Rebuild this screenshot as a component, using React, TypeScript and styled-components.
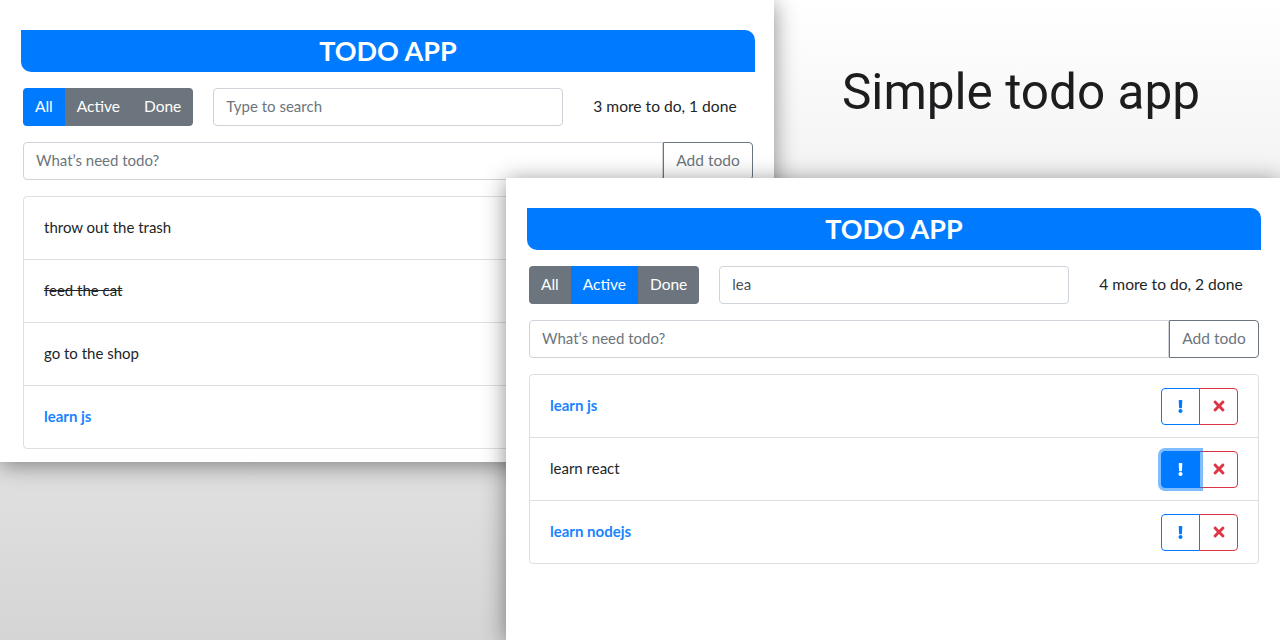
import React from 'react';
import styled, { createGlobalStyle, css } from 'styled-components';
import { FaExclamation, FaTimes } from 'react-icons/fa';

const Global = createGlobalStyle`
  html, body { margin: 0; padding: 0; }
  body {
    width: 1280px;
    height: 640px;
    overflow: hidden;
    font-family: Lato, "Noto Sans", sans-serif;
    color: #212529;
  }
  * { box-sizing: border-box; }
`;

const Stage = styled.div`
  position: relative;
  width: 1280px;
  height: 640px;
  overflow: hidden;
  background: linear-gradient(180deg, #ffffff 0%, #d5d5d5 100%);
`;

const Caption = styled.h2`
  position: absolute;
  left: 770px;
  top: 0;
  width: 502px;
  height: 184px;
  margin: 0;
  display: flex;
  align-items: center;
  justify-content: center;
  font-family: Roboto, "Liberation Sans", sans-serif;
  font-weight: 400;
  font-size: 49.5px;
  color: #1d1d1f;
`;

const Window = styled.div<{ $x: number; $y: number }>`
  position: absolute;
  left: ${(p) => p.$x}px;
  top: ${(p) => p.$y}px;
  width: 774px;
  height: 462px;
  background: #fff;
  box-shadow: 0 3px 22px rgba(0, 0, 0, 0.45);
  padding: 30px 19px 0 21px;
  overflow: hidden;
`;

const Header = styled.h1`
  margin: 0;
  height: 42px;
  padding-bottom: 1px;
  background: #007bff;
  color: #fff;
  border-radius: 0 10px 0 10px;
  display: flex;
  align-items: center;
  justify-content: center;
  font-size: 27px;
  font-weight: 700;
`;

const Body = styled.div`
  display: flex;
  flex-direction: column;
  gap: 16px;
  margin-top: 16px;
  padding: 0 2px;
`;

const FilterRow = styled.div`
  display: flex;
  align-items: center;
  height: 38px;
`;

const BtnGroup = styled.div`
  display: flex;
  border-radius: 4px;
  overflow: hidden;
`;

const FilterBtn = styled.button<{ $active?: boolean }>`
  height: 38px;
  padding: 0 12px 2px;
  border: none;
  font-family: inherit;
  font-size: 15.5px;
  color: #fff;
  background: ${(p) => (p.$active ? '#007bff' : '#6c757d')};
`;

const inputBase = css`
  height: 38px;
  border: 1px solid #ced4da;
  padding: 0 12px 2px;
  font-family: inherit;
  font-size: 15px;
  color: #495057;
  background: #fff;
  outline: none;
  &::placeholder { color: #6c757d; }
`;

const Search = styled.input`
  ${inputBase}
  width: 350px;
  margin-left: 20px;
  border-radius: 4px;
`;

const Status = styled.span`
  margin-left: 30px;
  padding-bottom: 2px;
  font-size: 15.6px;
  color: #212529;
`;

const AddForm = styled.form`
  display: flex;
  margin: 0;
`;

const AddInput = styled.input`
  ${inputBase}
  flex: 1;
  border-radius: 4px 0 0 4px;
`;

const AddBtn = styled.button`
  width: 90px;
  height: 38px;
  padding: 0 0 2px;
  border: 1px solid #6c757d;
  border-radius: 0 4px 4px 0;
  background: #fff;
  color: #6c757d;
  font-family: inherit;
  font-size: 15.5px;
`;

const List = styled.ul`
  margin: 0;
  padding: 0;
  list-style: none;
  border: 1px solid rgba(0, 0, 0, 0.125);
  border-radius: 4px;
`;

const Item = styled.li`
  height: 62px;
  box-sizing: content-box;
  padding: 0 20px;
  display: flex;
  align-items: center;
  justify-content: space-between;
  & + & { border-top: 1px solid rgba(0, 0, 0, 0.125); }
`;

const Label = styled.span<{ $done?: boolean; $important?: boolean }>`
  padding-bottom: 2px;
  font-size: 15px;
  color: ${(p) => (p.$important ? '#1a84ff' : '#212529')};
  font-weight: ${(p) => (p.$important ? 700 : 400)};
  text-decoration: ${(p) => (p.$done ? 'line-through' : 'none')};
`;

const Actions = styled.div`
  display: flex;
`;

const ActionBtn = styled.button<{ $kind: 'primary' | 'danger'; $active?: boolean }>`
  position: relative;
  width: 39px;
  height: 37px;
  padding: 0;
  display: flex;
  align-items: center;
  justify-content: center;
  border: 1px solid ${(p) => (p.$kind === 'primary' ? '#007bff' : '#dc3545')};
  color: ${(p) => (p.$active ? '#fff' : p.$kind === 'primary' ? '#007bff' : '#dc3545')};
  background: ${(p) => (p.$active ? '#007bff' : '#fff')};
  border-radius: ${(p) => (p.$kind === 'primary' ? '4px 0 0 4px' : '0 4px 4px 0')};
  & + & { margin-left: -1px; }
  ${(p) =>
    p.$active &&
    css`
      z-index: 1;
      box-shadow: 0 0 0 3px rgba(0, 123, 255, 0.5);
    `}
`;

type Todo = { label: string; done?: boolean; important?: boolean; focused?: boolean };

type AppProps = {
  filter: 'all' | 'active' | 'done';
  search: string;
  status: string;
  todos: Todo[];
};

const TodoApp: React.FC<AppProps> = ({ filter, search, status, todos }) => (
  <>
    <Header>TODO APP</Header>
    <Body>
      <FilterRow>
        <BtnGroup>
          <FilterBtn $active={filter === 'all'}>All</FilterBtn>
          <FilterBtn $active={filter === 'active'}>Active</FilterBtn>
          <FilterBtn $active={filter === 'done'}>Done</FilterBtn>
        </BtnGroup>
        <Search placeholder="Type to search" defaultValue={search} />
        <Status>{status}</Status>
      </FilterRow>
      <AddForm onSubmit={(e) => e.preventDefault()}>
        <AddInput placeholder="What’s need todo?" />
        <AddBtn type="button">Add todo</AddBtn>
      </AddForm>
      <List>
        {todos.map((t) => (
          <Item key={t.label}>
            <Label $done={t.done} $important={t.important}>
              {t.label}
            </Label>
            <Actions>
              <ActionBtn $kind="primary" $active={t.focused}>
                <FaExclamation size={13} />
              </ActionBtn>
              <ActionBtn $kind="danger">
                <FaTimes size={16} />
              </ActionBtn>
            </Actions>
          </Item>
        ))}
      </List>
    </Body>
  </>
);

export default function App() {
  return (
    <Stage>
      <Global />
      <Caption>Simple todo app</Caption>
      <Window $x={0} $y={0}>
        <TodoApp
          filter="all"
          search=""
          status="3 more to do, 1 done"
          todos={[
            { label: 'throw out the trash' },
            { label: 'feed the cat', done: true },
            { label: 'go to the shop' },
            { label: 'learn js', important: true },
          ]}
        />
      </Window>
      <Window $x={506} $y={178}>
        <TodoApp
          filter="active"
          search="lea"
          status="4 more to do, 2 done"
          todos={[
            { label: 'learn js', important: true },
            { label: 'learn react', focused: true },
            { label: 'learn nodejs', important: true },
          ]}
        />
      </Window>
    </Stage>
  );
}
